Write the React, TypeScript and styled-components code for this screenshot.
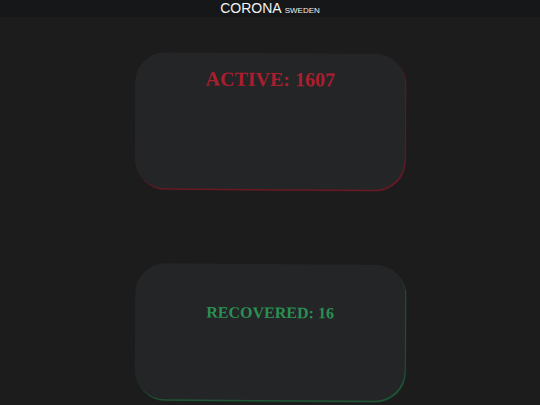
import React from 'react'
import styled, { createGlobalStyle } from 'styled-components'

const GlobalStyle = createGlobalStyle`
    html, body {
        margin: 0;
        padding: 0;
        background-color: #1c1c1d;
    }
    body {
        font-family: "Liberation Sans", Arial, sans-serif;
    }
`

const Page = styled.div`
    min-height: 405px;
    background-color: #1c1c1d;
    display: flex;
    flex-direction: column;
`

const Header = styled.header`
    height: 17px;
    background-color: #161718;
    display: flex;
    align-items: baseline;
    justify-content: center;
    color: #f2f2f2;
    line-height: 1;
    padding-top: 1px;
    box-sizing: border-box;
`

const Brand = styled.span`
    font-size: 14px;
`

const BrandSub = styled.span`
    font-size: 8px;
    margin-left: 3px;
`

const Cards = styled.main`
    display: flex;
    flex-direction: column;
    align-items: center;
    gap: 75px;
    padding-top: 36px;
    padding-right: 1px;
`

const Card = styled.section<{ $accent: string; $pad: number }>`
    width: 270px;
    height: 136px;
    box-sizing: border-box;
    background-color: #242527;
    border-radius: 30px;
    box-shadow: 1px 1.5px 1px ${p => p.$accent};
    transform: rotate(0.4deg);
    padding-top: ${p => p.$pad}px;
    text-align: center;
`

const Stat = styled.h2<{ $color: string; $size: number }>`
    margin: 0;
    color: ${p => p.$color};
    font-family: "Liberation Serif", "Times New Roman", serif;
    font-weight: 700;
    font-size: ${p => p.$size}px;
    line-height: 1.2;
`

const stats = [
    { label: 'ACTIVE', value: 1607, color: '#a91f2e', accent: '#6d1a24', size: 20, pad: 14 },
    { label: 'RECOVERED', value: 16, color: '#2b8f52', accent: '#1f5a37', size: 16, pad: 39 },
]

const App = () => (
    <Page>
        <GlobalStyle />
        <Header>
            <Brand>CORONA</Brand>
            <BrandSub>SWEDEN</BrandSub>
        </Header>
        <Cards>
            {stats.map(s => (
                <Card key={s.label} $accent={s.accent} $pad={s.pad}>
                    <Stat $color={s.color} $size={s.size}>
                        {s.label}: {s.value}
                    </Stat>
                </Card>
            ))}
        </Cards>
    </Page>
)

export default App
